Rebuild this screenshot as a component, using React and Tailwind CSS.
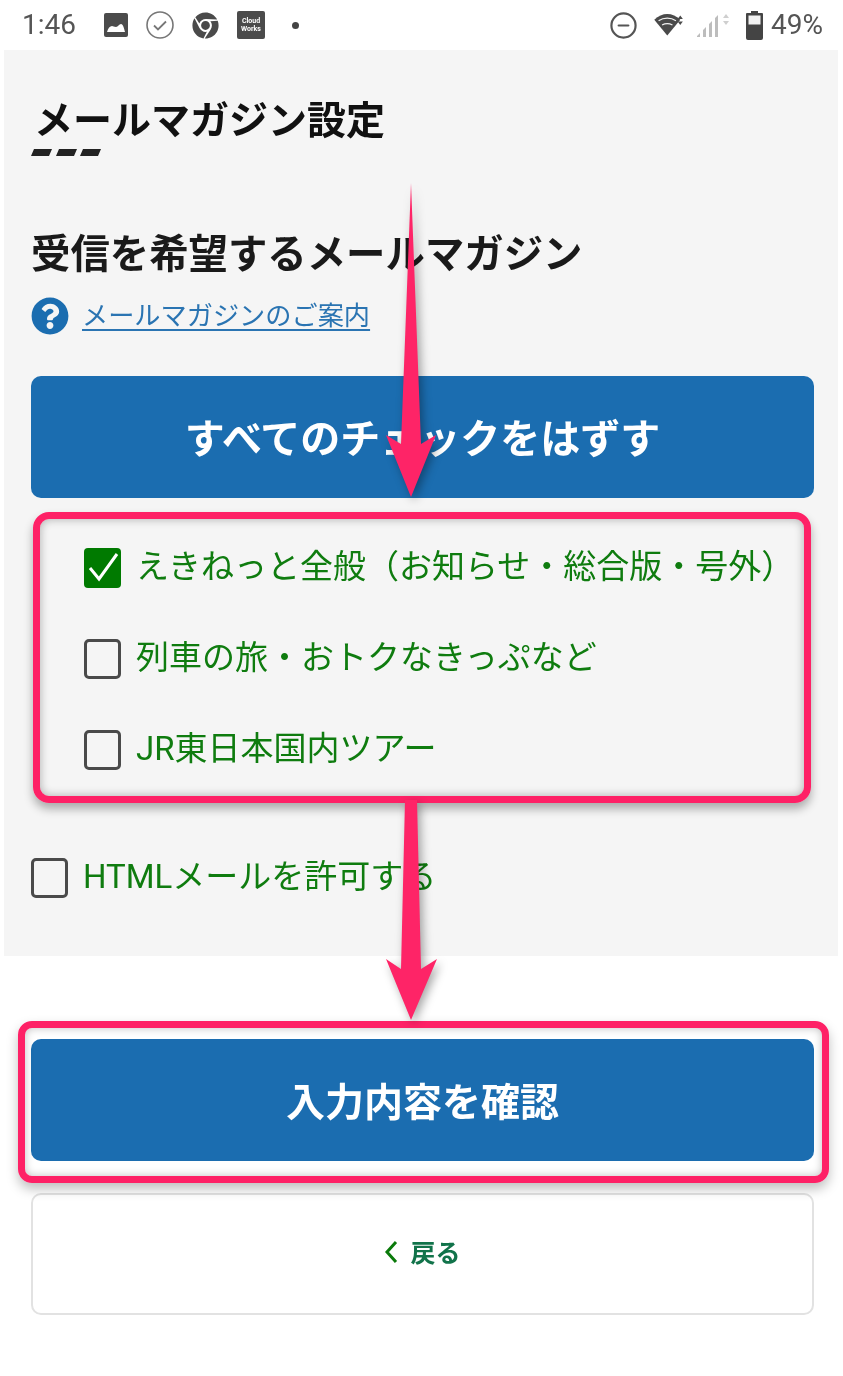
import { CircleMinus } from "lucide-react";
import { FaChrome, FaQuestionCircle } from "react-icons/fa";

const FONT = "font-['Roboto','Noto_Sans_CJK_JP',sans-serif]";
const OPTIONS = [
  { label: "えきねっと全般（お知らせ・総合版・号外）", checked: true },
  { label: "列車の旅・おトクなきっぷなど", checked: false },
  { label: "JR東日本国内ツアー", checked: false },
];

function CheckBox({ checked }) {
  if (checked) {
    return (
      <span className="flex h-[40px] w-[37px] shrink-0 items-center justify-center rounded-[4px] bg-[#007a00]">
        <svg className="h-[40px] w-[37px]" viewBox="0 0 37 40" fill="none" stroke="#fff" strokeWidth="3">
          <path d="M6 20l9 11L33 6" />
        </svg>
      </span>
    );
  }
  return <span className="h-[40px] w-[37px] shrink-0 rounded-[5px] border-[3px] border-[#4a4a4a] bg-[#f5f5f5]" />;
}

function StatusBar() {
  return (
    <div className="flex h-[50px] items-center justify-between pl-[22px] pr-[20px] text-[#555]">
      <div className="flex items-center">
        <span className="w-[81px] text-[28px] leading-none">1:46</span>
        <svg className="h-[26px] w-[26px]" viewBox="0 0 26 26">
          <rect x="1" y="1" width="24" height="24" rx="2" fill="#4b4b4b" />
          <path d="M4 20c1-4 3-6 5-6 1 0 2 1 4 1s3-3 5-3 3 4 4 8z" fill="#fff" />
        </svg>
        <svg className="ml-[16px] h-[30px] w-[30px]" viewBox="0 0 30 30" fill="none" stroke="#777">
          <circle cx="15" cy="15" r="13" strokeWidth="1.6" />
          <path d="M9 15.5l4 4 8-8" strokeWidth="1.8" />
        </svg>
        <FaChrome className="ml-[17px] h-[27px] w-[27px] text-[#4a4a4a]" />
        <div className="ml-[18px] flex h-[28px] w-[28px] flex-col items-center justify-center rounded-[2px] bg-[#4b4b4b] text-[7px] font-bold leading-[8px] text-white">
          <span>Cloud</span>
          <span>Works</span>
        </div>
        <span className="ml-[27px] h-[7px] w-[7px] rounded-full bg-[#444]" />
      </div>
      <div className="flex items-center">
        <CircleMinus className="h-[29px] w-[29px]" strokeWidth={1.8} />
        <svg className="ml-[15px] h-[26px] w-[32px]" viewBox="0 0 36 30">
          <path d="M1 9c9-9 21-9 30 0L16 27z" fill="#4a4a4a" />
          <path d="M6 10c6-4 14-4 20 0" stroke="#f2f2f2" strokeWidth="1.500" fill="none" />
          <path d="M10 15c4-2 8-2 12 0" stroke="#f2f2f2" strokeWidth="1.500" fill="none" />
          <path d="M31 4l3 4h-6zM31 15l3-4h-6z" fill="#4a4a4a" />
        </svg>
        <svg className="ml-[11px] h-[30px] w-[36px]" viewBox="0 0 36 30">
          <path d="M1 26l3-3v4H1zM7 20l3-3v10H7zM13 14l3-3v16h-3zM19 8l3-3v22h-3z" fill="#bdbdbd" />
          <path d="M30 4l3 4h-6zM30 15l3-4h-6z" fill="#cfcfcf" />
        </svg>
        <svg className="ml-[14px] h-[30px] w-[17px]" viewBox="0 0 17 30">
          <path d="M5 3V1h7v2h4a1 1 0 0 1 1 1v24a2 2 0 0 1-2 2H2a2 2 0 0 1-2-2V4a1 1 0 0 1 1-1z" fill="#444" />
          <rect x="2.500" y="5.500" width="12" height="9" fill="#f2f2f2" />
        </svg>
        <span className="ml-[8px] text-[28px] leading-none">49%</span>
      </div>
    </div>
  );
}

function Annotations() {
  return (
    <>
      <div className="pointer-events-none absolute left-[33px] top-[512px] h-[291px] w-[778px] rounded-[16px] border-[7px] border-[#fe2166] shadow-[0_6px_10px_rgba(0,0,0,0.3),inset_0_0_10px_rgba(0,0,0,0.3)]" />
      <div className="pointer-events-none absolute left-[18px] top-[1021px] h-[162px] w-[811px] rounded-[14px] border-[7px] border-[#fe2166] shadow-[0_6px_12px_rgba(0,0,0,0.25),inset_0_0_8px_rgba(0,0,0,0.25)]" />
      <svg className="pointer-events-none absolute left-0 top-0 h-[1376px] w-[843px] drop-shadow-[3px_4px_5px_rgba(0,0,0,0.35)]" viewBox="0 0 843 1376">
        <path d="M411 183 L421 444 L436 435 L411 497 L386 435 L401 444 Z" fill="#fe2467" />
        <path d="M405 800 L417 800 L421 969 L437 959 L411 1020 L386 959 L401 969 Z" fill="#fe2467" />
      </svg>
    </>
  );
}

export default function App() {
  return (
    <div className={`relative h-[1376px] w-[843px] overflow-hidden bg-white blur-[0.5px] ${FONT}`}>
      <StatusBar />

      <div className="mx-[4px] h-[906px] w-[834px] bg-[#f5f5f5] px-[27px] pt-[46px]">
        <h1 className="ml-[3px] text-[39px] font-bold leading-[50px] text-[#111]">メールマガジン設定</h1>
        <svg className="mt-[3px] block h-[8px] w-[70px]" viewBox="0 0 70 8">
          <path d="M3 0h18l-3 7H0zM28 0h18l-3 7H25zM52 0h18l-3 7H49z" fill="#222" />
        </svg>

        <h2 className="mt-[70px] text-[39.400px] font-bold leading-[56px] text-[#1a1a1a]">受信を希望するメールマガジン</h2>

        <div className="mt-[14px] flex items-center gap-[13px]">
          <FaQuestionCircle className="h-[38px] w-[38px] text-[#1b6db0]" />
          <a className="text-[26.200px] leading-[38px] text-[#2a74b2] underline underline-offset-[4px]">メールマガジンのご案内</a>
        </div>

        <button className="mt-[41px] block h-[122px] w-[783px] rounded-[10px] bg-[#1b6db0] pt-[5px] text-[40px] font-bold text-white">
          すべてのチェックをはずす
        </button>

        <div className="mt-[50px] flex flex-col gap-[51px] pl-[53px]">
          {OPTIONS.map((o) => (
            <div key={o.label} className="flex h-[40px] items-center gap-[15px]">
              <CheckBox checked={o.checked} />
              <span className="mt-[-3px] whitespace-nowrap text-[33px] leading-[40px] text-[#0f7c0f]">{o.label}</span>
            </div>
          ))}
        </div>

        <div className="mt-[88px] flex h-[40px] items-center gap-[15px]">
          <CheckBox checked={false} />
          <span className="mt-[-3px] whitespace-nowrap text-[33px] leading-[40px] text-[#0f7c0f]">HTMLメールを許可する</span>
        </div>
      </div>

      <div className="mt-[83px] flex flex-col gap-[32px] pl-[31px]">
        <button className="h-[122px] w-[783px] rounded-[10px] bg-[#1b6db0] pt-[6px] text-[39px] font-bold text-white">入力内容を確認</button>
        <button className="flex h-[122px] w-[783px] items-center justify-center gap-[12px] rounded-[10px] border-2 border-[#e2e2e2] bg-white text-[25px] font-bold text-[#11734a]">
          <svg className="mb-[5px] h-[24px] w-[14px]" viewBox="0 0 14 24" fill="none" stroke="#0a7a0a" strokeWidth="3">
            <path d="M12 2L3 12l9 10" />
          </svg>
          戻る
        </button>
      </div>

      <Annotations />
    </div>
  );
}
